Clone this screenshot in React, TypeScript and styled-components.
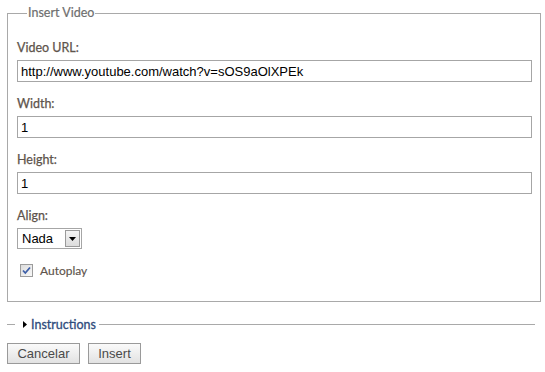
import React from 'react';
import styled, { createGlobalStyle } from 'styled-components';

const GlobalStyle = createGlobalStyle`
  html, body {
    margin: 0;
    padding: 0;
    background: #fff;
  }
  body {
    font-family: Lato, "Open Sans", sans-serif;
  }
`;

const Page = styled.div`
  width: 545px;
  height: 372px;
  box-sizing: border-box;
  padding: 5px 5px 0 7px;
`;

const Fieldset = styled.fieldset`
  margin: 0;
  width: 534px;
  box-sizing: border-box;
  height: 297px;
  border: 1px solid #a9a9a9;
  padding: 19px 8px 0 9px;
`;

const Legend = styled.legend`
  padding: 0 1px;
  margin-left: 10px;
  font-size: 12.5px;
  line-height: 16px;
  color: #6f6f6f;
  -webkit-text-stroke: 0.2px #6f6f6f;
`;

const Field = styled.div`
  display: flex;
  flex-direction: column;
  align-items: flex-start;
  margin-bottom: 14px;
`;

const Label = styled.label`
  display: block;
  font-size: 12.5px;
  line-height: 16px;
  color: #5e544c;
  -webkit-text-stroke: 0.25px #5e544c;
  margin-bottom: 4px;
`;

const TextInput = styled.input`
  width: 515px;
  height: 22px;
  box-sizing: border-box;
  border: 1px solid #a6a6a6;
  padding: 0 3px;
  margin: 0;
  font-family: "Liberation Sans", Arial, sans-serif;
  font-size: 13px;
  color: #000;
  outline: none;
`;

const SelectBox = styled.div`
  display: flex;
  align-items: center;
  width: 65px;
  height: 21px;
  box-sizing: border-box;
  border: 1px solid #a6a6a6;
  padding: 1px;
`;

const SelectValue = styled.span`
  flex: 1;
  padding-left: 3px;
  font-family: "Liberation Sans", Arial, sans-serif;
  font-size: 13px;
  color: #000;
`;

const SelectArrow = styled.span`
  display: flex;
  align-items: center;
  justify-content: center;
  width: 15px;
  height: 17px;
  box-sizing: border-box;
  border: 1px solid #9a9a9a;
  background: linear-gradient(#f4f4f4, #dcdcdc);
`;

const CheckRow = styled.label`
  display: flex;
  align-items: center;
  gap: 7px;
  margin: 14px 0 0 3px;
  font-size: 12px;
  color: #5e544c;
  -webkit-text-stroke: 0.15px #5e544c;
`;

const CheckBox = styled.span`
  display: inline-flex;
  align-items: center;
  justify-content: center;
  width: 13px;
  height: 13px;
  box-sizing: border-box;
  border: 1px solid #9c9c9c;
  background: linear-gradient(135deg, #dcdcdc, #f8f8f8);
`;

const Collapsible = styled.div`
  display: flex;
  align-items: center;
  height: 16px;
  margin-top: 14px;
  width: 528px;
`;

const Rule = styled.span<{ $grow?: boolean }>`
  display: block;
  height: 1px;
  background: #a9a9a9;
  width: ${p => (p.$grow ? 'auto' : '8px')};
  flex: ${p => (p.$grow ? 1 : 'none')};
`;

const Toggle = styled.span`
  display: flex;
  align-items: center;
  gap: 4px;
  padding: 0 3px 0 8px;
  font-size: 12.5px;
  color: #2f4c7c;
  -webkit-text-stroke: 0.3px #2f4c7c;
`;

const Buttons = styled.div`
  display: flex;
  gap: 8px;
  margin-top: 11px;
`;

const Button = styled.button<{ $w: number }>`
  width: ${p => p.$w}px;
  height: 21px;
  box-sizing: border-box;
  border: 1px solid #9a9a9a;
  background: linear-gradient(#fafafa, #e2e2e2);
  font-family: "Liberation Sans", Arial, sans-serif;
  font-size: 13px;
  color: #4a4a4a;
  padding: 0;
  margin: 0;
`;

export default function App() {
  return (
    <Page>
      <GlobalStyle />
      <Fieldset>
        <Legend>Insert Video</Legend>
        <Field>
          <Label>Video URL:</Label>
          <TextInput defaultValue="http://www.youtube.com/watch?v=sOS9aOlXPEk" />
        </Field>
        <Field>
          <Label>Width:</Label>
          <TextInput defaultValue="1" />
        </Field>
        <Field>
          <Label>Height:</Label>
          <TextInput defaultValue="1" />
        </Field>
        <Field>
          <Label>Align:</Label>
          <SelectBox>
            <SelectValue>Nada</SelectValue>
            <SelectArrow>
              <svg width="7" height="4" viewBox="0 0 7 4">
                <path d="M0 0h7L3.5 4z" fill="#000" />
              </svg>
            </SelectArrow>
          </SelectBox>
          <CheckRow>
            <CheckBox>
              <svg width="9" height="9" viewBox="0 0 9 9">
                <path d="M1 4.5l2.3 2.5L8 1.5" stroke="#3d5fa8" strokeWidth="1.8" fill="none" />
              </svg>
            </CheckBox>
            Autoplay
          </CheckRow>
        </Field>
      </Fieldset>
      <Collapsible>
        <Rule />
        <Toggle>
          <svg width="4" height="7" viewBox="0 0 4 7">
            <path d="M0 0l4 3.5L0 7z" fill="#000" />
          </svg>
          Instructions
        </Toggle>
        <Rule $grow />
      </Collapsible>
      <Buttons>
        <Button $w={73}>Cancelar</Button>
        <Button $w={53}>Insert</Button>
      </Buttons>
    </Page>
  );
}
